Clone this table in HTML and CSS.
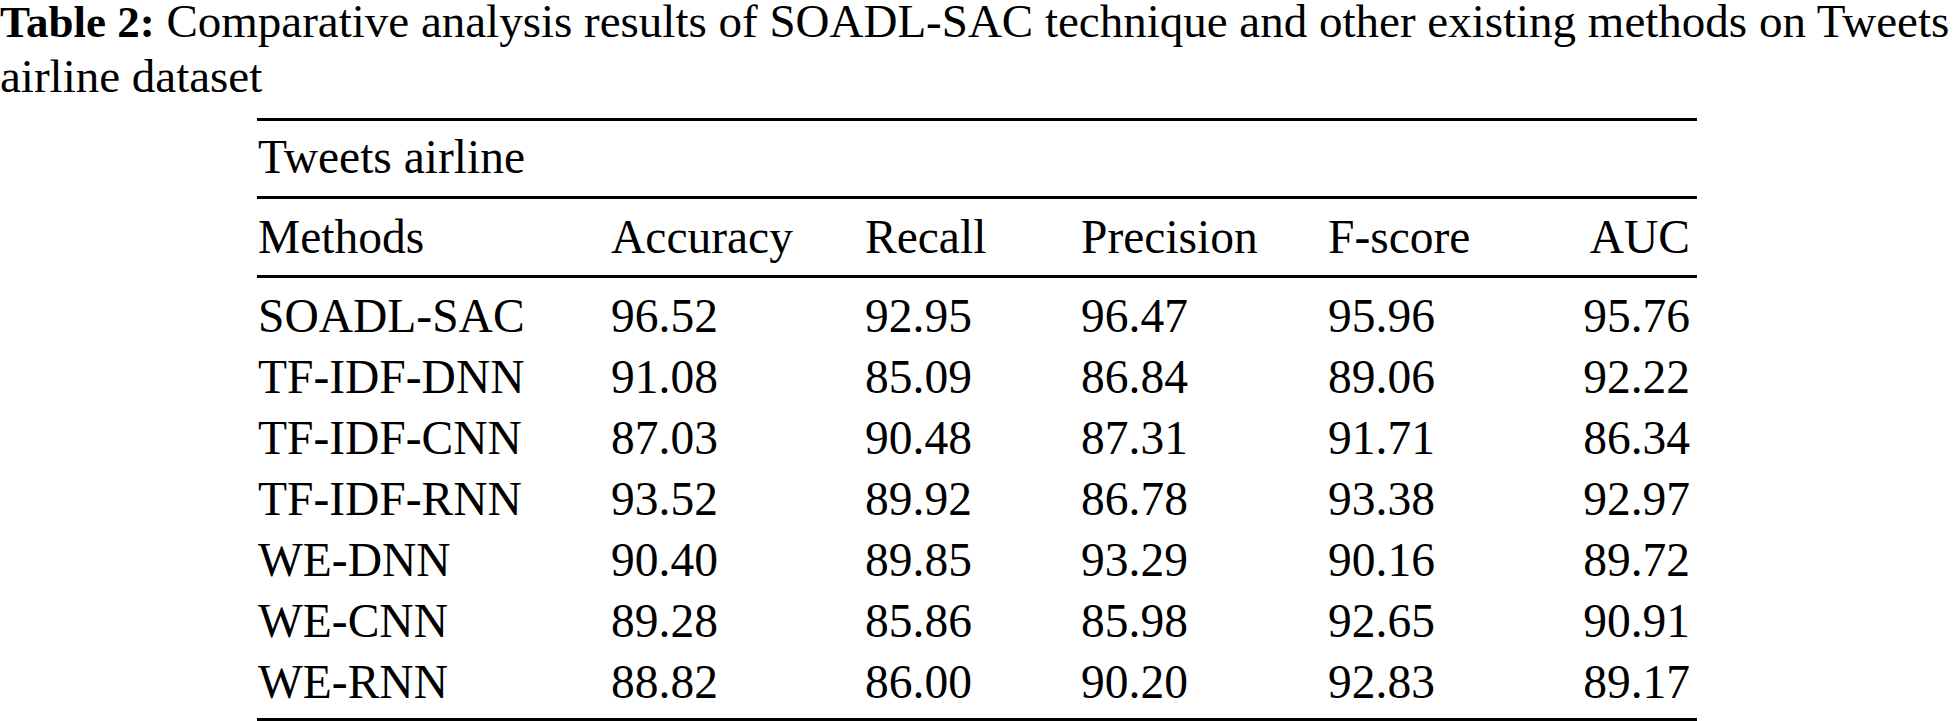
FILE: index.html
```html
<!DOCTYPE html>
<html lang="en">
<head>
<meta charset="utf-8">
<title>Table 2</title>
<link rel="stylesheet" href="styles.css">
</head>
<body>
<p class="caption"><b>Table 2:</b> Comparative analysis results of SOADL-SAC technique and other existing methods on Tweets airline dataset</p>
<div class="tbl">
  <div class="rule"></div>
  <div class="group">Tweets airline</div>
  <div class="rule"></div>
  <div class="row head">
    <span>Methods</span><span>Accuracy</span><span>Recall</span><span>Precision</span><span>F-score</span><span class="r">AUC</span>
  </div>
  <div class="rule"></div>
  <div class="body">
    <div class="row"><span>SOADL-SAC</span><span>96.52</span><span>92.95</span><span>96.47</span><span>95.96</span><span class="r">95.76</span></div>
    <div class="row"><span>TF-IDF-DNN</span><span>91.08</span><span>85.09</span><span>86.84</span><span>89.06</span><span class="r">92.22</span></div>
    <div class="row"><span>TF-IDF-CNN</span><span>87.03</span><span>90.48</span><span>87.31</span><span>91.71</span><span class="r">86.34</span></div>
    <div class="row"><span>TF-IDF-RNN</span><span>93.52</span><span>89.92</span><span>86.78</span><span>93.38</span><span class="r">92.97</span></div>
    <div class="row"><span>WE-DNN</span><span>90.40</span><span>89.85</span><span>93.29</span><span>90.16</span><span class="r">89.72</span></div>
    <div class="row"><span>WE-CNN</span><span>89.28</span><span>85.86</span><span>85.98</span><span>92.65</span><span class="r">90.91</span></div>
    <div class="row"><span>WE-RNN</span><span>88.82</span><span>86.00</span><span>90.20</span><span>92.83</span><span class="r">89.17</span></div>
  </div>
  <div class="rule"></div>
</div>
</body>
</html>
```
FILE: styles.css
```css
html, body {
  margin: 0;
  padding: 0;
  background: #fff;
  color: #000;
}
body {
  font-family: "Liberation Serif", "Times New Roman", serif;
  width: 1954px;
  height: 721px;
  overflow: hidden;
}
.caption {
  margin: -6px 0 0 0;
  font-size: 47px;
  line-height: 54px;
  text-align: left;
}
.caption b {
  font-weight: bold;
  font-size: 45px;
}
.tbl {
  margin: 15px 0 0 257px;
  width: 1440px;
  font-size: 47.5px;
  line-height: 61px;
}
.rule {
  height: 3px;
  background: #000;
}
.group {
  padding: 6px 0 8px 1px;
}
.row {
  display: grid;
  grid-template-columns: 353px 254px 216px 247px 200px 1fr;
  padding-left: 1px;
}
.row .r {
  text-align: right;
  padding-right: 7px;
}
.head {
  padding-top: 8px;
  padding-bottom: 7px;
}
.body {
  padding: 8px 0 5px 0;
}
```
